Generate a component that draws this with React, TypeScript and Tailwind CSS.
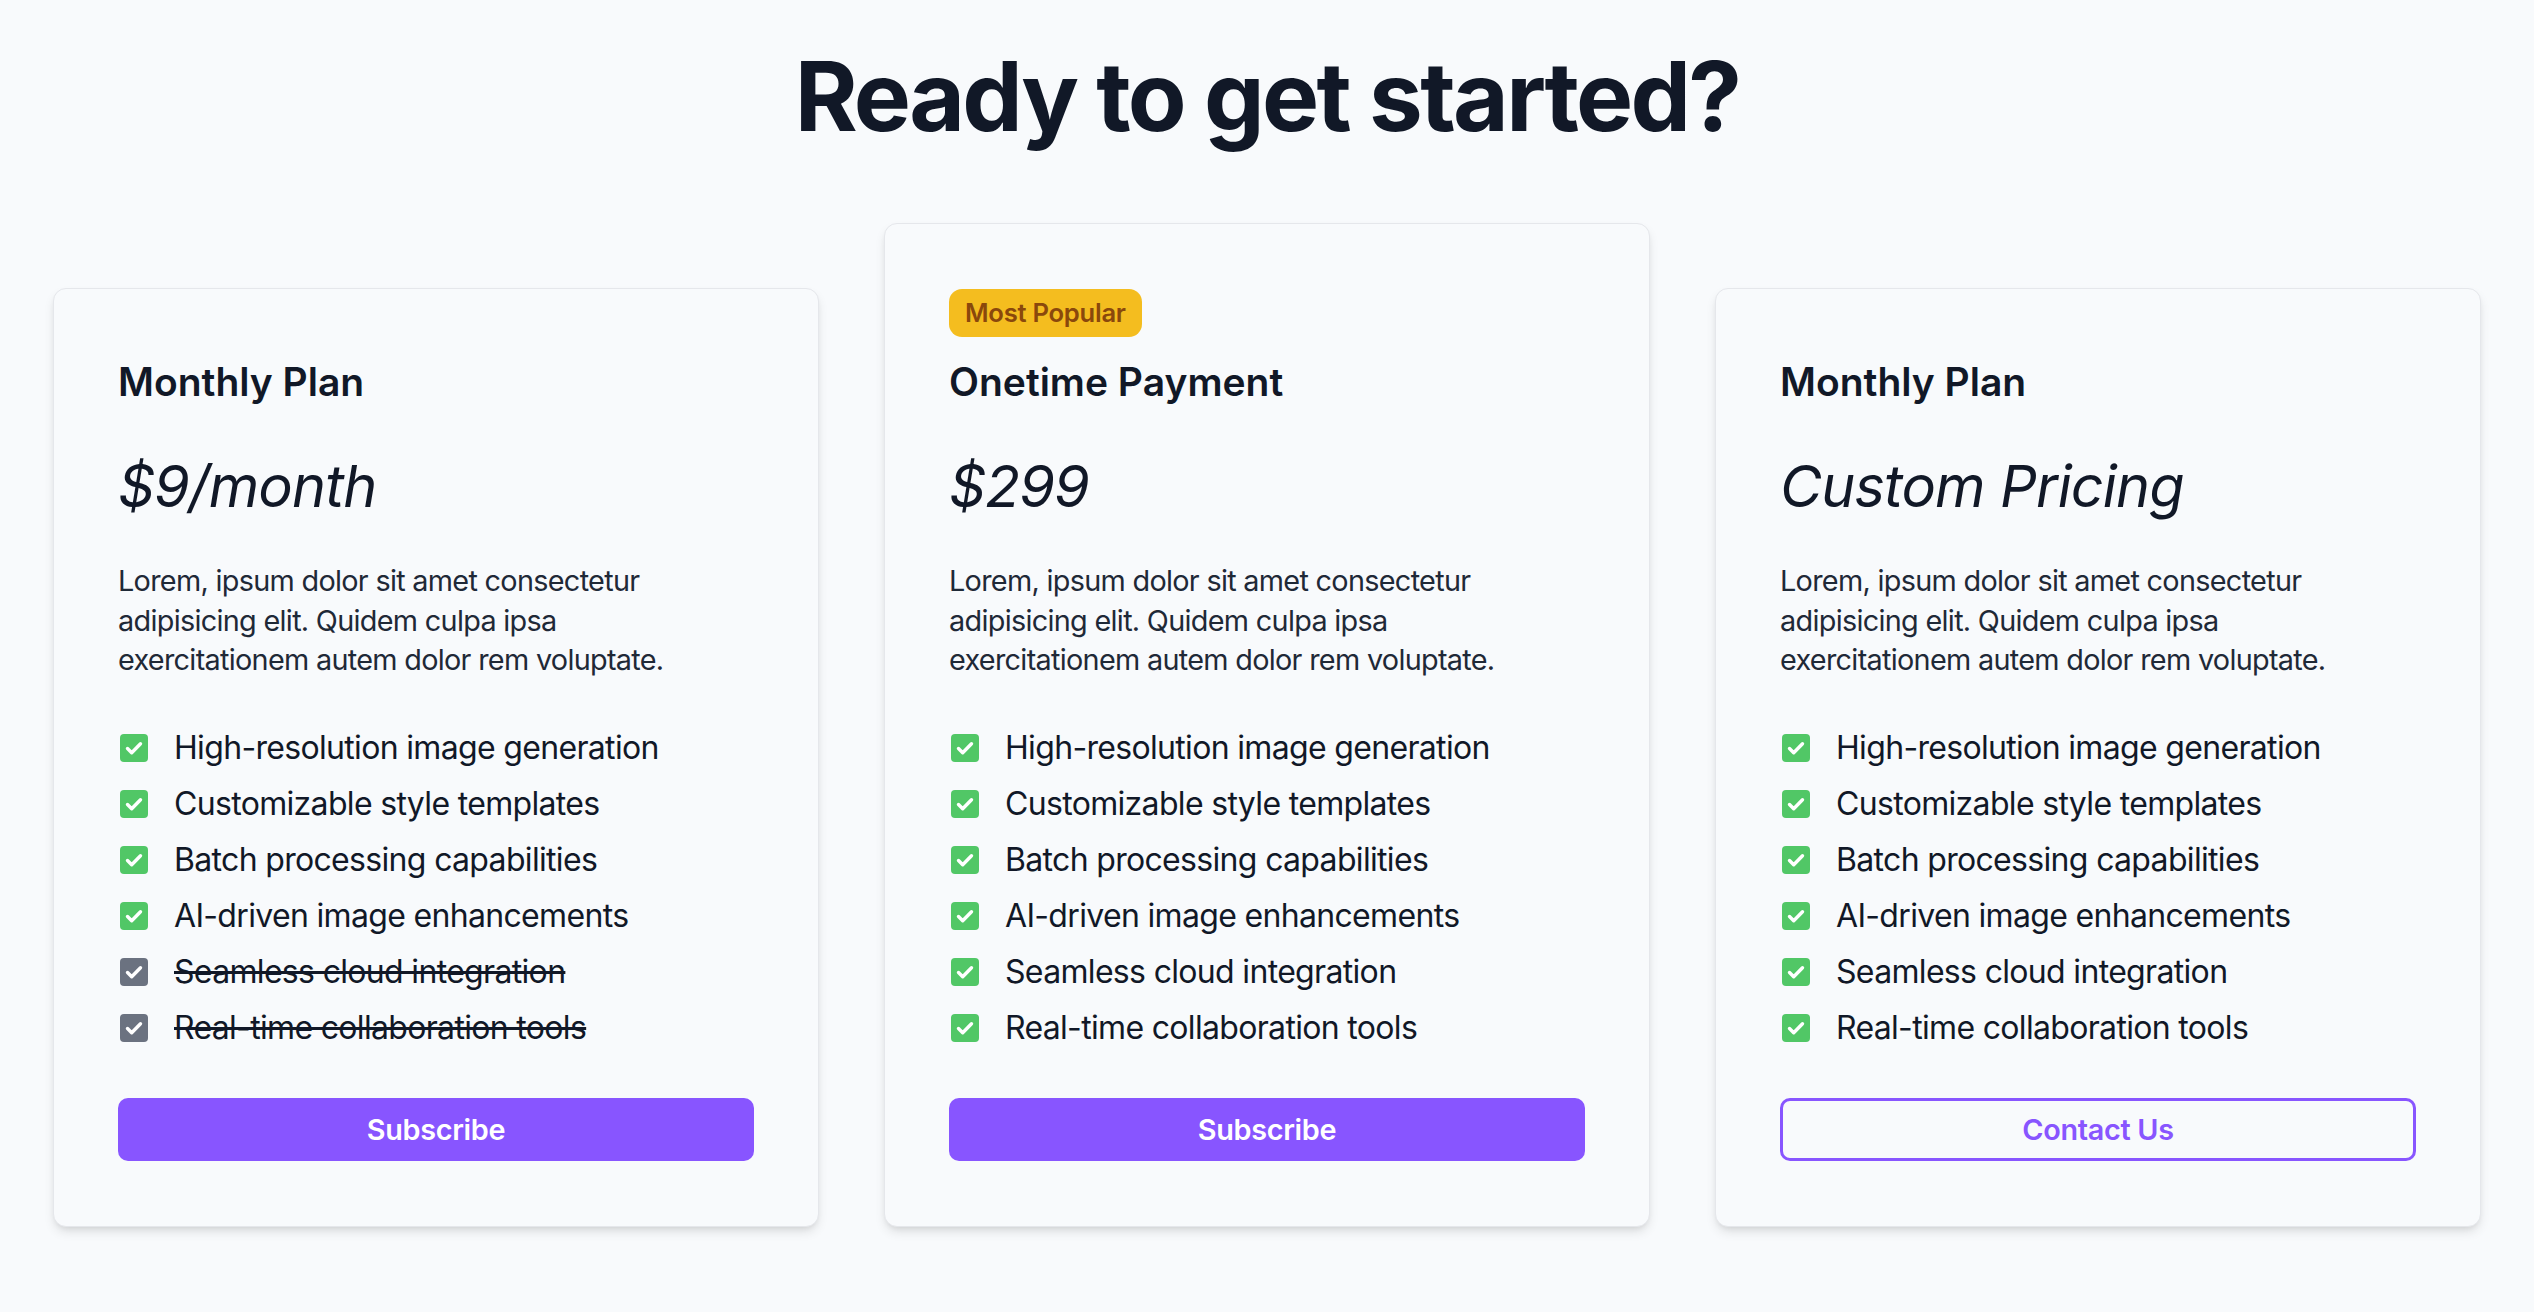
import React from 'react';

interface Plan {
  name: string;
  price: string;
  badge?: string;
  features: { label: string; included: boolean }[];
  cta: string;
  outline?: boolean;
}

const featureNames = [
  'High-resolution image generation',
  'Customizable style templates',
  'Batch processing capabilities',
  'AI-driven image enhancements',
  'Seamless cloud integration',
  'Real-time collaboration tools',
];

const plans: Plan[] = [
  {
    name: 'Monthly Plan',
    price: '$9/month',
    features: featureNames.map((label, i) => ({ label, included: i < 4 })),
    cta: 'Subscribe',
  },
  {
    name: 'Onetime Payment',
    price: '$299',
    badge: 'Most Popular',
    features: featureNames.map((label) => ({ label, included: true })),
    cta: 'Subscribe',
  },
  {
    name: 'Monthly Plan',
    price: 'Custom Pricing',
    features: featureNames.map((label) => ({ label, included: true })),
    cta: 'Contact Us',
    outline: true,
  },
];

const CheckSquare: React.FC<{ active: boolean }> = ({ active }) => (
  <svg viewBox="0 0 28 28" className="w-[28px] h-[28px] shrink-0">
    <rect width="28" height="28" rx="4" fill={active ? '#51c766' : '#6b7280'} />
    <path
      d="M7.5 14.5l4.2 4.2 8.8-9"
      fill="none"
      stroke="#ffffff"
      strokeWidth="3.4"
      strokeLinecap="round"
      strokeLinejoin="round"
    />
  </svg>
);

const PlanCard: React.FC<{ plan: Plan }> = ({ plan }) => (
  <div className="w-[766px] bg-[#f8fafc] border border-[#e5e7eb] rounded-[13px] px-[64px] pt-[65px] pb-[65px] shadow-[0_6px_12px_-2px_rgba(0,0,0,0.12),0_3px_6px_-3px_rgba(0,0,0,0.1)]">
    {plan.badge && (
      <div className="mb-[17px]">
        <span className="inline-flex items-center h-[48px] px-[16px] rounded-[13px] bg-[#f4bd1f] text-[#8a480c] text-[25.6px] tracking-[-0.01em] font-semibold">
          {plan.badge}
        </span>
      </div>
    )}
    <h3 className="text-[39px] leading-[56px] font-semibold text-[#111827]">{plan.name}</h3>
    <p className="mt-[44px] text-[57.6px] leading-[64px] italic font-normal tracking-[-0.015em] text-[#111827]">
      {plan.price}
    </p>
    <p className="mt-[43px] text-[28.8px] leading-[39.6px] tracking-[-0.024em] text-[#1f2937] pr-[40px]">
      Lorem, ipsum dolor sit amet consectetur adipisicing elit. Quidem culpa ipsa exercitationem autem dolor rem voluptate.
    </p>
    <ul className="mt-[40px]">
      {plan.features.map((f) => (
        <li key={f.label} className="flex items-center gap-[26px] h-[56px] pl-[2px]">
          <CheckSquare active={f.included} />
          <span className={`text-[32px] tracking-[-0.021em] text-[#111827] ${f.included ? '' : 'line-through'}`}>
            {f.label}
          </span>
        </li>
      ))}
    </ul>
    <button
      className={`mt-[42px] w-full h-[63px] rounded-[10px] text-[28.8px] tracking-[-0.01em] font-semibold ${
        plan.outline
          ? 'border-[3px] border-[#8855ff] text-[#8855ff] bg-transparent'
          : 'bg-[#8855ff] text-white'
      }`}
    >
      {plan.cta}
    </button>
  </div>
);

export default function App() {
  return (
    <div
      className="min-h-screen bg-[#f8fafc] pt-[48px] pb-[80px]"
      style={{ fontFamily: 'Inter, "Noto Sans", sans-serif' }}
    >
      <h1 className="text-center text-[96px] leading-none font-bold tracking-[-0.028em] text-[#111827]">
        Ready to get started?
      </h1>
      <div className="mt-[79px] flex justify-center items-end gap-[65px]">
        {plans.map((plan, i) => (
          <PlanCard key={i} plan={plan} />
        ))}
      </div>
    </div>
  );
}
